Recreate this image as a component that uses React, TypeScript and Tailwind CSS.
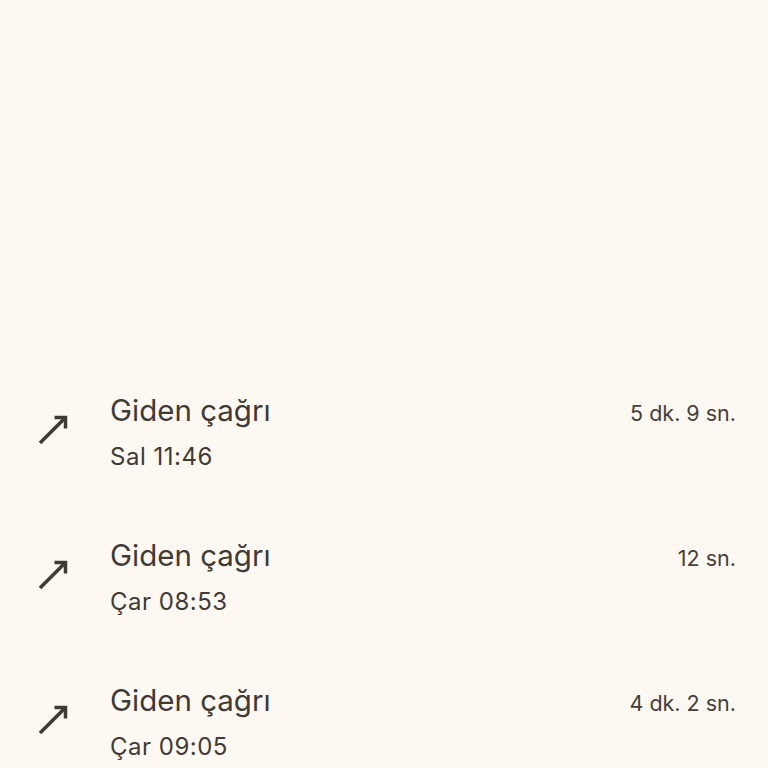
const CALLS = [
  { title: "Giden çağrı", when: "Sal 11:46", duration: "5 dk. 9 sn." },
  { title: "Giden çağrı", when: "Çar 08:53", duration: "12 sn." },
  { title: "Giden çağrı", when: "Çar 09:05", duration: "4 dk. 2 sn." },
];

const OutgoingIcon = () => (
  <svg width="32" height="32" viewBox="0 0 32 32" fill="none" stroke="#3f3a35" strokeWidth="3.5">
    <path d="M17.5 3.5H28.5V14.5" strokeLinecap="butt" strokeLinejoin="miter" />
    <path d="M28.5 3.5L3 29" strokeLinecap="butt" />
  </svg>
);

export default function App() {
  return (
    <div
      className="h-[768px] w-[768px] overflow-hidden bg-[#fef8f2] pt-[361px] text-[#3f3a35]"
      style={{ fontFamily: "Inter, Roboto, sans-serif" }}
    >
      {CALLS.map((call, i) => (
        <div key={i} className="flex h-[145px] items-start py-[31px]">
          <div className="w-[110px] shrink-0 pl-[37px] pt-[22px]">
            <OutgoingIcon />
          </div>
          <div className="flex-1 pr-[32px]">
            <div className="flex h-[36px] items-baseline justify-between">
              <span className="text-[29.5px] leading-[36px]">{call.title}</span>
              <span className="text-[21.5px] leading-[36px] text-[#45403b]">{call.duration}</span>
            </div>
            <div className="mt-[11px] h-[36px] text-[24px] leading-[36px] tracking-[0.5px]">{call.when}</div>
          </div>
        </div>
      ))}
    </div>
  );
}
